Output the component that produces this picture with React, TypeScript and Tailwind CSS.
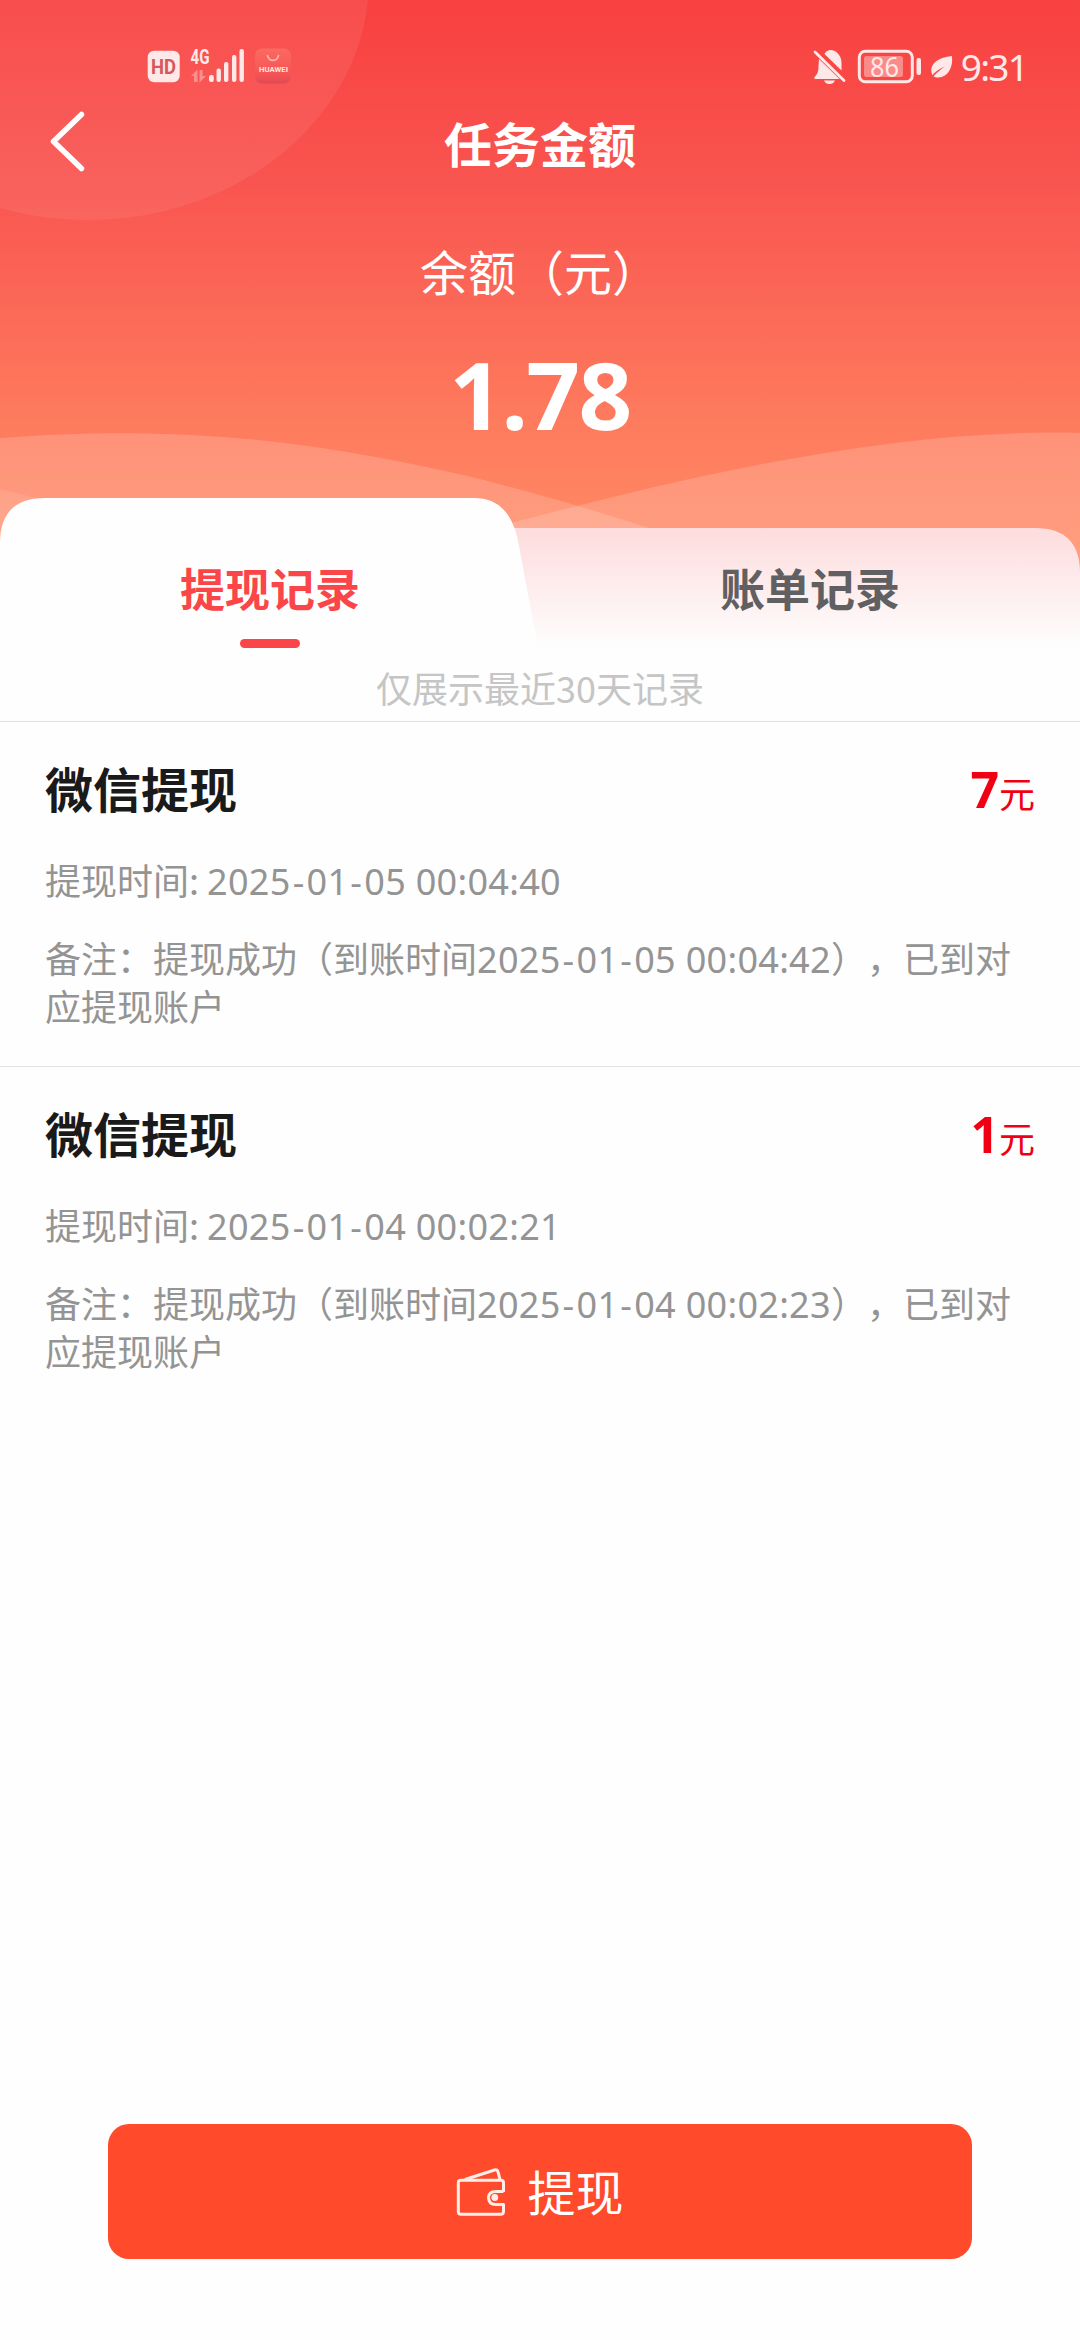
import { Fragment } from "react";

const records = [
  { amount: "7", time: "2025-01-05 00:04:40", arrived: "2025-01-05 00:04:42" },
  { amount: "1", time: "2025-01-04 00:02:21", arrived: "2025-01-04 00:02:23" },
];

function HeaderBackdrop() {
  return (
    <svg className="absolute inset-0 h-full w-full" viewBox="0 0 1080 660" aria-hidden="true">
      <defs>
        <linearGradient id="sky" x1="0" y1="0" x2="0" y2="1">
          <stop offset="0" stopColor="#f84040" />
          <stop offset="0.28" stopColor="#f95550" />
          <stop offset="0.65" stopColor="#fe7c5e" />
          <stop offset="0.82" stopColor="#ff8964" />
          <stop offset="1" stopColor="#ff9068" />
        </linearGradient>
        <linearGradient id="tab" x1="0" y1="528" x2="0" y2="650" gradientUnits="userSpaceOnUse">
          <stop offset="0" stopColor="#fddcdd" />
          <stop offset="1" stopColor="#fefefe" />
        </linearGradient>
      </defs>
      <rect width="1080" height="660" fill="url(#sky)" />
      <ellipse cx="88" cy="-20" rx="281" ry="240" fill="#fff" fillOpacity="0.07" />
      <path d="M0 438C200 422 350 448 480 479C550 497 610 515 660 532V660H0Z" fill="#fff" fillOpacity="0.17" />
      <path d="M1080 433C900 428 700 473 515 522L480 532V660H1080Z" fill="#fff" fillOpacity="0.17" />
      <path d="M0 489L36 498L120 530V660H0Z" fill="#fff" fillOpacity="0.1" />
      <path d="M500 528H1035Q1080 528 1080 573V660H500Z" fill="url(#tab)" />
      <path d="M0 660V543Q0 498 45 498H475Q511 498 519 546L536 637Q538 650 542 660Z" fill="#fefefe" />
    </svg>
  );
}

function StatusBar() {
  return (
    <div className="relative flex h-[96px] items-start justify-between pl-[147px] pr-[53px] pt-[48px] text-[#ffe9e8]">
      <div className="flex items-start">
        <svg className="h-[36px] w-[34px]" viewBox="147 48 34 36">
          <rect x="147.700" y="50.700" width="32" height="31.500" rx="6.500" fill="#ffe9e8" />
          <text x="151" y="74" fontFamily="Roboto" fontWeight="700" fontSize="20.500" fill="#d8575a" textLength="25" lengthAdjust="spacingAndGlyphs">HD</text>
        </svg>
        <svg className="ml-[9px] h-[36px] w-[56px] overflow-visible" viewBox="190 48 56 36" fill="currentColor">
          <text x="190.500" y="64" fontFamily="Roboto" fontWeight="700" fontSize="20.500" textLength="19" lengthAdjust="spacingAndGlyphs">4G</text>
          <g opacity="0.4">
            <path d="M191 76L197.500 69.500V82H194V76Z" />
            <path d="M199.500 70H202.500V76H206L199.500 82.500Z" />
          </g>
          <rect x="209" y="75" width="4.800" height="7" rx="2" />
          <rect x="216.500" y="68.500" width="4.400" height="13.500" rx="2" />
          <rect x="224" y="62" width="4.400" height="20" rx="2" />
          <rect x="232" y="55" width="4.400" height="27" rx="2" />
          <rect x="239.500" y="49" width="4.400" height="33" rx="2" />
        </svg>
        <svg className="ml-[8px] h-[36px] w-[38px]" viewBox="253 48 38 36">
          <defs>
            <linearGradient id="store" x1="0" y1="0" x2="0" y2="1">
              <stop offset="0" stopColor="#fb6a62" />
              <stop offset="0.7" stopColor="#f65554" />
              <stop offset="1" stopColor="#e14a54" />
            </linearGradient>
          </defs>
          <rect x="254" y="48.500" width="36" height="35" rx="7" fill="url(#store)" />
          <path d="M266.500 55.500C268 62 276 62 277.500 55.500" fill="none" stroke="#ffb3ab" strokeWidth="1.600" strokeLinecap="round" />
          <text x="258" y="72" fontFamily="Roboto" fontWeight="700" fontSize="7" fill="#ffe3e0" textLength="29" lengthAdjust="spacingAndGlyphs">HUAWEI</text>
        </svg>
      </div>
      <div className="flex items-start">
        <svg className="h-[36px] w-[140px]" viewBox="811 48 140 36" fill="currentColor">
          <path d="M822.500 54C824 51 826 50 829 50C836 51 839.500 57 839.500 63V70.500Z" />
          <path d="M817 59L837.500 79H812.500C812 77.500 812.500 77 813.500 76C815.500 74 816.500 71 816.500 66Z" />
          <path d="M813 52L842 80.500" stroke="currentColor" strokeWidth="2.800" strokeLinecap="round" />
          <path d="M822 80.500H833C832 83 830 84 827.500 84S823 83 822 80.500Z" />
          <rect x="857.300" y="51.300" width="53" height="30.500" rx="6" fill="none" stroke="currentColor" strokeWidth="3" />
          <rect x="862" y="56" width="39" height="21" rx="2.500" opacity="0.42" />
          <rect x="914.500" y="58" width="4.500" height="17" rx="2" />
          <text x="868" y="76.500" fontFamily="Noto Sans" fontSize="27" textLength="29" lengthAdjust="spacingAndGlyphs">86</text>
          <path d="M949.800 56C951.500 65 947 77.500 936.500 77.500C934 77.500 932.500 77 931.500 76.200C935 72.500 939 69 943 66.500C938.500 68 933.500 71.500 930.200 75C926.500 65.500 934 57.500 949.800 56Z" />
        </svg>
        <span className="ml-[8px] font-['Noto_Sans',sans-serif] text-[37px] leading-[37px] tracking-[-1.800px] text-[#ffe9e8]">9:31</span>
      </div>
    </div>
  );
}

function WalletIcon() {
  return (
    <svg className="h-[50px] w-[50px]" viewBox="456 2167 50 50" fill="none" stroke="#ffeee8" strokeWidth="3" strokeLinejoin="round">
      <path d="M503.500 2192V2183Q503.500 2180.300 500.800 2180.300H461Q458.300 2180.300 458.300 2183V2211.500Q458.300 2214.200 461 2214.200H500.800Q503.500 2214.200 503.500 2211.500V2204.500H496Q488.500 2204.500 488.500 2197.500Q488.500 2191.500 496 2191.500H503.500" />
      <path d="M465 2179.500L494.500 2170Q497.300 2169.200 498 2172L500 2179.500" />
      <circle cx="494.800" cy="2197.500" r="3.400" fill="#ffeee8" stroke="none" />
    </svg>
  );
}

function Timestamp({ value }: { value: string }) {
  return (
    <span className="font-['Noto_Sans',sans-serif] leading-none tracking-[0.300px]">
      {value.split("-").map((part, i) => (
        <Fragment key={i}>
          {i > 0 && <span className="mx-[2px]">-</span>}
          {part}
        </Fragment>
      ))}
    </span>
  );
}

export default function App() {
  return (
    <div className="flex h-[2340px] w-[1080px] flex-col overflow-hidden bg-[#fefefe] font-['Noto_Sans_CJK_SC',sans-serif] [text-spacing-trim:space-all]">
      <header className="relative h-[660px] shrink-0 text-white">
        <HeaderBackdrop />
        <StatusBar />
        <div className="relative grid h-[90px] grid-cols-[1fr_auto_1fr] items-center">
          <svg className="ml-[48px] h-[64px] w-[40px]" viewBox="48 109 40 64" fill="none" stroke="#fff" strokeWidth="5.500" strokeLinecap="round" strokeLinejoin="round">
            <path d="M81.500 114.500L53.500 141.500L81.500 168.500" />
          </svg>
          <h1 className="pt-px text-5xl font-bold leading-[72px]">任务金额</h1>
        </div>
        <div className="relative mt-[48px] text-center text-5xl leading-[72px]">余额（元）</div>
        <div className="relative mt-[33px] text-center font-['Noto_Sans'] text-[94px] font-bold leading-[110px] tracking-[-1.500px]">1.78</div>
        <nav className="relative mt-[49px] grid h-[162px] grid-cols-2 text-[45px] font-bold leading-[66px]">
          <div className="flex flex-col items-center pt-[57px] text-[#fb4649]">
            提现记录
            <span className="mt-[18px] h-[9px] w-[60px] rounded-full bg-[#fb4649]" />
          </div>
          <div className="flex flex-col items-center pt-[57px] text-[#606062]">账单记录</div>
        </nav>
      </header>

      <p className="h-[62px] shrink-0 border-b border-[#e2e2e2] text-center text-4xl leading-[54px] text-[#c5c5c5]">仅展示最近30天记录</p>

      <main className="flex-1">
        {records.map((r) => (
          <article key={r.time} className="h-[345px] border-b border-[#e2e2e2] px-[45px] pt-[29px] text-4xl text-[#949494] last:border-b-0">
            <div className="flex h-[72px] items-baseline justify-between">
              <h2 className="text-5xl font-bold leading-[72px] text-[#1a1a1a]">微信提现</h2>
              <span className="text-[#f00012]">
                <span className="font-['Noto_Sans'] text-[50px] font-bold leading-[72px]">{r.amount}</span>元
              </span>
            </div>
            <p className="mt-[29px] leading-[54px]">
              提现时间: <Timestamp value={r.time} />
            </p>
            <p className="mt-[27px] leading-[48px]">
              备注：提现成功（到账时间<Timestamp value={r.arrived} />），已到对应提现账户
            </p>
          </article>
        ))}
      </main>

      <footer className="px-[108px] pb-[81px]">
        <button className="flex h-[135px] w-full items-center justify-center gap-[21px] rounded-[21px] bg-[#ff4a2c] text-5xl leading-[72px] text-white">
          <WalletIcon />
          <span className="pb-[3px]">提现</span>
        </button>
      </footer>
    </div>
  );
}
